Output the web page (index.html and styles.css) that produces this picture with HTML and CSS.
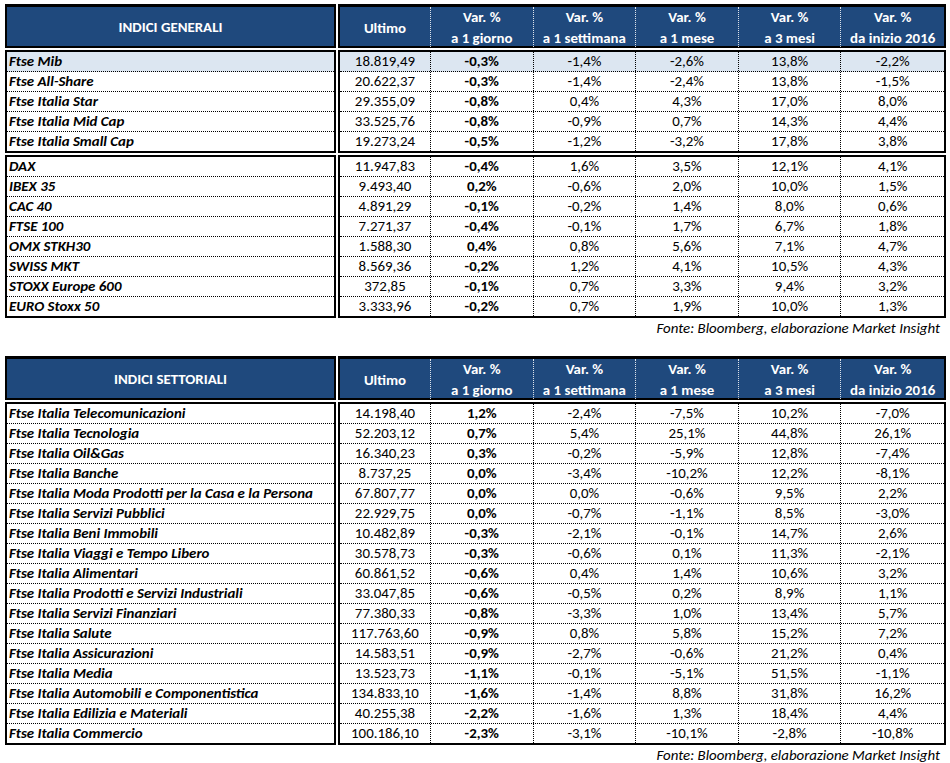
FILE: index.html
```html
<!DOCTYPE html>
<html lang="it">
<head>
<meta charset="utf-8">
<title>Indici</title>
<link rel="stylesheet" href="styles.css">
</head>
<body>
<div class="page">
  <div class="tbl">
    <div class="hname">INDICI GENERALI</div>
    <div class="hnums">
      <div class="hc">Ultimo</div>
      <div class="hc">Var. %<br>a 1 giorno</div>
      <div class="hc">Var. %<br>a 1 settimana</div>
      <div class="hc">Var. %<br>a 1 mese</div>
      <div class="hc">Var. %<br>a 3 mesi</div>
      <div class="hc">Var. %<br>da inizio 2016</div>
    </div>
    <div class="names">
      <div class="n hl">Ftse Mib</div>
      <div class="n">Ftse All-Share</div>
      <div class="n">Ftse Italia Star</div>
      <div class="n">Ftse Italia Mid Cap</div>
      <div class="n">Ftse Italia Small Cap</div>
    </div>
    <div class="nums">
      <div class="row hl"><span>18.819,49</span><span class="b">-0,3%</span><span>-1,4%</span><span>-2,6%</span><span>13,8%</span><span>-2,2%</span></div>
      <div class="row"><span>20.622,37</span><span class="b">-0,3%</span><span>-1,4%</span><span>-2,4%</span><span>13,8%</span><span>-1,5%</span></div>
      <div class="row"><span>29.355,09</span><span class="b">-0,8%</span><span>0,4%</span><span>4,3%</span><span>17,0%</span><span>8,0%</span></div>
      <div class="row"><span>33.525,76</span><span class="b">-0,8%</span><span>-0,9%</span><span>0,7%</span><span>14,3%</span><span>4,4%</span></div>
      <div class="row"><span>19.273,24</span><span class="b">-0,5%</span><span>-1,2%</span><span>-3,2%</span><span>17,8%</span><span>3,8%</span></div>
    </div>
    <div class="names last">
      <div class="n">DAX</div>
      <div class="n">IBEX 35</div>
      <div class="n">CAC 40</div>
      <div class="n">FTSE 100</div>
      <div class="n">OMX STKH30</div>
      <div class="n">SWISS MKT</div>
      <div class="n">STOXX Europe 600</div>
      <div class="n">EURO Stoxx 50</div>
    </div>
    <div class="nums last">
      <div class="row"><span>11.947,83</span><span class="b">-0,4%</span><span>1,6%</span><span>3,5%</span><span>12,1%</span><span>4,1%</span></div>
      <div class="row"><span>9.493,40</span><span class="b">0,2%</span><span>-0,6%</span><span>2,0%</span><span>10,0%</span><span>1,5%</span></div>
      <div class="row"><span>4.891,29</span><span class="b">-0,1%</span><span>-0,2%</span><span>1,4%</span><span>8,0%</span><span>0,6%</span></div>
      <div class="row"><span>7.271,37</span><span class="b">-0,4%</span><span>-0,1%</span><span>1,7%</span><span>6,7%</span><span>1,8%</span></div>
      <div class="row"><span>1.588,30</span><span class="b">0,4%</span><span>0,8%</span><span>5,6%</span><span>7,1%</span><span>4,7%</span></div>
      <div class="row"><span>8.569,36</span><span class="b">-0,2%</span><span>1,2%</span><span>4,1%</span><span>10,5%</span><span>4,3%</span></div>
      <div class="row"><span>372,85</span><span class="b">-0,1%</span><span>0,7%</span><span>3,3%</span><span>9,4%</span><span>3,2%</span></div>
      <div class="row"><span>3.333,96</span><span class="b">-0,2%</span><span>0,7%</span><span>1,9%</span><span>10,0%</span><span>1,3%</span></div>
    </div>
  </div>
  <div class="note">Fonte: Bloomberg, elaborazione Market Insight</div>

  <div class="tbl second">
    <div class="hname">INDICI SETTORIALI</div>
    <div class="hnums">
      <div class="hc">Ultimo</div>
      <div class="hc">Var. %<br>a 1 giorno</div>
      <div class="hc">Var. %<br>a 1 settimana</div>
      <div class="hc">Var. %<br>a 1 mese</div>
      <div class="hc">Var. %<br>a 3 mesi</div>
      <div class="hc">Var. %<br>da inizio 2016</div>
    </div>
    <div class="names last">
      <div class="n">Ftse Italia Telecomunicazioni</div>
      <div class="n">Ftse Italia Tecnologia</div>
      <div class="n">Ftse Italia Oil&amp;Gas</div>
      <div class="n">Ftse Italia Banche</div>
      <div class="n">Ftse Italia Moda Prodotti per la Casa e la Persona</div>
      <div class="n">Ftse Italia Servizi Pubblici</div>
      <div class="n">Ftse Italia Beni Immobili</div>
      <div class="n">Ftse Italia Viaggi e Tempo Libero</div>
      <div class="n">Ftse Italia Alimentari</div>
      <div class="n">Ftse Italia Prodotti e Servizi Industriali</div>
      <div class="n">Ftse Italia Servizi Finanziari</div>
      <div class="n">Ftse Italia Salute</div>
      <div class="n">Ftse Italia Assicurazioni</div>
      <div class="n">Ftse Italia Media</div>
      <div class="n">Ftse Italia Automobili e Componentistica</div>
      <div class="n">Ftse Italia Edilizia e Materiali</div>
      <div class="n">Ftse Italia Commercio</div>
    </div>
    <div class="nums last">
      <div class="row"><span>14.198,40</span><span class="b">1,2%</span><span>-2,4%</span><span>-7,5%</span><span>10,2%</span><span>-7,0%</span></div>
      <div class="row"><span>52.203,12</span><span class="b">0,7%</span><span>5,4%</span><span>25,1%</span><span>44,8%</span><span>26,1%</span></div>
      <div class="row"><span>16.340,23</span><span class="b">0,3%</span><span>-0,2%</span><span>-5,9%</span><span>12,8%</span><span>-7,4%</span></div>
      <div class="row"><span>8.737,25</span><span class="b">0,0%</span><span>-3,4%</span><span>-10,2%</span><span>12,2%</span><span>-8,1%</span></div>
      <div class="row"><span>67.807,77</span><span class="b">0,0%</span><span>0,0%</span><span>-0,6%</span><span>9,5%</span><span>2,2%</span></div>
      <div class="row"><span>22.929,75</span><span class="b">0,0%</span><span>-0,7%</span><span>-1,1%</span><span>8,5%</span><span>-3,0%</span></div>
      <div class="row"><span>10.482,89</span><span class="b">-0,3%</span><span>-2,1%</span><span>-0,1%</span><span>14,7%</span><span>2,6%</span></div>
      <div class="row"><span>30.578,73</span><span class="b">-0,3%</span><span>-0,6%</span><span>0,1%</span><span>11,3%</span><span>-2,1%</span></div>
      <div class="row"><span>60.861,52</span><span class="b">-0,6%</span><span>0,4%</span><span>1,4%</span><span>10,6%</span><span>3,2%</span></div>
      <div class="row"><span>33.047,85</span><span class="b">-0,6%</span><span>-0,5%</span><span>0,2%</span><span>8,9%</span><span>1,1%</span></div>
      <div class="row"><span>77.380,33</span><span class="b">-0,8%</span><span>-3,3%</span><span>1,0%</span><span>13,4%</span><span>5,7%</span></div>
      <div class="row"><span>117.763,60</span><span class="b">-0,9%</span><span>0,8%</span><span>5,8%</span><span>15,2%</span><span>7,2%</span></div>
      <div class="row"><span>14.583,51</span><span class="b">-0,9%</span><span>-2,7%</span><span>-0,6%</span><span>21,2%</span><span>0,4%</span></div>
      <div class="row"><span>13.523,73</span><span class="b">-1,1%</span><span>-0,1%</span><span>-5,1%</span><span>51,5%</span><span>-1,1%</span></div>
      <div class="row"><span>134.833,10</span><span class="b">-1,6%</span><span>-1,4%</span><span>8,8%</span><span>31,8%</span><span>16,2%</span></div>
      <div class="row"><span>40.255,38</span><span class="b">-2,2%</span><span>-1,6%</span><span>1,3%</span><span>18,4%</span><span>4,4%</span></div>
      <div class="row"><span>100.186,10</span><span class="b">-2,3%</span><span>-3,1%</span><span>-10,1%</span><span>-2,8%</span><span>-10,8%</span></div>
    </div>
  </div>
  <div class="note">Fonte: Bloomberg, elaborazione Market Insight</div>
</div>
</body>
</html>
```

FILE: styles.css
```css
html, body {
  margin: 0;
  padding: 0;
  background: #ffffff;
}

body {
  font-family: "Carlito", "Calibri", "Lato", "Liberation Sans", sans-serif;
  font-size: 14.9px;
  color: #000000;
}

.page {
  width: 950px;
  padding: 4px 0 0 5px;
  box-sizing: border-box;
}

.tbl {
  display: grid;
  grid-template-columns: 331px 608px;
  column-gap: 2px;
  row-gap: 2px;
}

.tbl.second {
  margin-top: 19px;
}

.hname {
  background: #1f497d;
  color: #ffffff;
  font-weight: 700;
  border: 2px solid #000;
  border-top-width: 3px;
  height: 39px;
  display: flex;
  align-items: center;
  justify-content: center;
}

.hnums {
  background: #1f497d;
  color: #ffffff;
  font-weight: 700;
  border: 2px solid #000;
  border-top-width: 3px;
  height: 39px;
  display: grid;
  grid-template-columns: 91px repeat(5, 1fr);
}

.hc {
  display: flex;
  align-items: center;
  justify-content: center;
  text-align: center;
  line-height: 21px;
  border-right: 1px dotted rgba(255, 255, 255, 0.85);
}

.hc:last-child {
  border-right: none;
}

.names,
.nums {
  border: 2px solid #000;
}

.n {
  height: 19px;
  line-height: 19px;
  padding-left: 2px;
  font-weight: 700;
  font-style: italic;
  border-bottom: 1px dotted #000;
  white-space: nowrap;
}

.n:last-child {
  border-bottom: none;
}

.row {
  display: grid;
  grid-template-columns: 91px repeat(5, 1fr);
  height: 19px;
  border-bottom: 1px dotted #000;
}

.row:last-child {
  border-bottom: none;
}

.row span {
  display: block;
  text-align: center;
  line-height: 19px;
  border-right: 1px dotted #000;
}

.row span:last-child {
  border-right: none;
}

.row .b {
  font-weight: 700;
}

.hl {
  background: #dce6f1;
}

.note {
  width: 935px;
  text-align: right;
  font-style: italic;
  height: 18px;
  line-height: 18px;
  margin-top: 1px;
}
```
